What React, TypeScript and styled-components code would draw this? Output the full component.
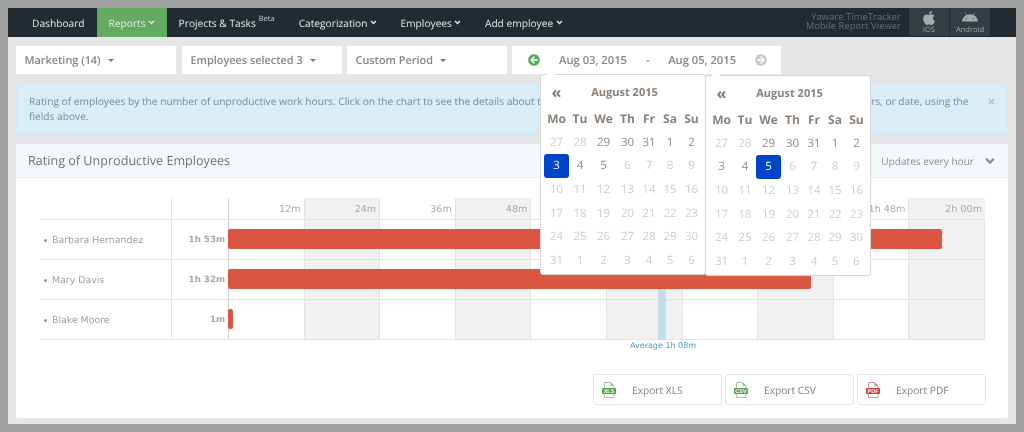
import React from 'react';
import styled, { createGlobalStyle } from 'styled-components';
import { FaAngleDown, FaAndroid, FaApple, FaArrowCircleLeft, FaArrowCircleRight, FaTimes } from 'react-icons/fa';

const Global = createGlobalStyle`
  html, body { margin: 0; padding: 0; height: 100%; overflow: hidden; background: #a0a0a0; }
  body { padding: 8px; box-sizing: border-box; font-family: "Open Sans", "Liberation Sans", sans-serif; text-rendering: geometricPrecision; }
  * { box-sizing: border-box; }
`;

const Frame = styled.div`
  width: 1008px; height: 416px; background: #e6e6e6; position: relative; overflow: hidden; filter: blur(.35px);
`;
const Nav = styled.nav`
  height: 29px; background: #212b30; display: flex; align-items: stretch; padding-left: 12px; color: #e4eaea;
`;
const NavItem = styled.div<{ $active?: boolean }>`
  padding: 0 12px; display: flex; align-items: center; gap: 3px; font-size: 10.2px; white-space: nowrap;
  background: ${p => (p.$active ? '#62ab61' : 'transparent')};
  sup { font-size: 7.5px; line-height: 8px; position: relative; top: -4px; color: #c9d0d2; }
`;
const NavChevron = styled(FaAngleDown)`
  margin: 0 -1.5px;
`;
const NavPromo = styled.div`
  margin-left: auto; display: flex; align-items: stretch; gap: 1px; padding-right: 26px;
`;
const PromoText = styled.div`
  font-size: 9.3px; line-height: 9.5px; color: #666f73; text-align: right; align-self: center; margin: 0 7px 3px 0; letter-spacing: .1px;
`;
const StoreButton = styled.div`
  width: 40px; height: 28px; background: #343d42; color: #a5abad; display: flex; flex-direction: column; align-items: center;
  font-size: 7.5px; line-height: 9px; padding-top: 2px;
`;
const Page = styled.main`
  padding: 9px 8px 0; display: flex; flex-direction: column; gap: 9px;
`;
const Filters = styled.div`
  display: flex; gap: 5px; height: 28px;
`;
const Select = styled.div`
  width: 160px; background: #fff; color: #858585; font-size: 10.9px; font-weight: 600; display: flex; align-items: center; padding-left: 8.5px; gap: 6px;
  &:nth-child(2) { margin-left: 1px; }
`;
const Caret = styled.span`
  border: 3px solid transparent; border-top-color: #777; border-bottom: 0; width: 0; height: 0; margin-left: 1px;
`;
const DateRange = styled.div`
  width: 269px; background: #fff; display: flex; align-items: center; padding-left: 16px; color: #858585; font-size: 11.2px; font-weight: 600;
`;
const DateValue = styled.span<{ $w: number }>`
  width: ${p => p.$w}px; text-align: center; white-space: nowrap;
`;
const Alert = styled.div`
  height: 52px; background: #d8edf6; border: 1px solid #d0e8f2; border-radius: 2px; padding: 10px 30px 0 12px; font-size: 10.2px; line-height: 15px; color: #6e8ea3; position: relative;
`;
const Close = styled.span`
  position: absolute; right: 11px; top: 13px; color: #b3c4cc; font-size: 9px; line-height: 9px;
`;
const Card = styled.section`
  background: #fff; border-radius: 2px; height: 274px; display: flex; flex-direction: column;
`;
const CardHeader = styled.header`
  height: 34px; background: #f3f9fb; border-bottom: 1px solid #e8eef0; display: flex; align-items: center; justify-content: space-between;
  padding: 0 11px 0 12px; color: #6b7378; font-size: 12.6px;
`;
const Updates = styled.div`
  display: flex; align-items: center; gap: 9px; font-size: 10.1px; color: #8a8f92;
`;
const Chart = styled.div`
  margin: 20px 0 0 24px; width: 945px; font-family: "DejaVu Sans", Verdana, sans-serif;
`;
const Row = styled.div<{ $h: number }>`
  display: grid; grid-template-columns: 132px 57px 1fr; height: ${p => p.$h}px; border-bottom: 1px solid #e3e3e3;
`;
const BlankCell = styled.div`
  border-right: 1px solid #e3e3e3;
`;
const AxisCell = styled(BlankCell)`
  border-right-color: #cfcfcf;
`;
const NameCell = styled.div`
  border-right: 1px solid #e3e3e3; display: flex; align-items: center; padding: 1px 0 0 4px; color: #a0a0a0; font-size: 9.4px; gap: 5px;
  &::before { content: ''; width: 3px; height: 3px; border-radius: 50%; background: #999; }
`;
const ValueCell = styled.div`
  border-right: 1px solid #cfcfcf; display: flex; align-items: center; justify-content: flex-end; padding: 1px 3px 0 0; color: #a8a8a8; font-size: 8.7px; font-weight: 700;
`;
const Plot = styled.div`
  display: grid; grid-template-columns: repeat(10, 1fr); position: relative;
`;
const Stripe = styled.div<{ $even: boolean }>`
  background: ${p => (p.$even ? '#f1f1f1' : '#fff')}; border-right: 1px solid #e3e3e3; color: #aaa; font-size: 9.6px; display: flex; justify-content: flex-end; align-items: center; padding: 1px 3px 0 0; white-space: nowrap;
  &:last-child { border-right: 0; }
`;
const Bar = styled.div`
  position: absolute; left: -1px; top: 9px; height: 20px; background: #da5640; border-radius: 2px; z-index: 2;
`;
const AverageBand = styled.div`
  position: absolute; left: 429px; top: 0; bottom: -1px; width: 8px; background: #c3deeb; z-index: 1;
`;
const AverageLabel = styled.div`
  position: absolute; left: 401px; top: 100%; margin-top: 2px; color: #4b9fcf; font-size: 8px; line-height: 10px; white-space: nowrap;
`;
const Exports = styled.div`
  display: flex; justify-content: flex-end; gap: 3px; padding-right: 22px; margin-top: 34px;
`;
const ExportButton = styled.div`
  width: 129px; height: 31px; border: 1px solid #e6e6e6; border-radius: 3px; display: flex; align-items: center; padding-left: 8px; gap: 16px; color: #7a7f85; font-size: 10.2px;
`;
const Popover = styled.div<{ $left: number; $top: number }>`
  position: absolute; left: ${p => p.$left}px; top: ${p => p.$top}px; width: 166px; height: 201px; background: #fff; border: 1px solid #d6d6d6; border-radius: 3px; padding: 5px 3px 0; z-index: 5;
  &::before { content: ''; position: absolute; left: 5px; top: -5px; border: 5px solid transparent; border-top: 0; border-bottom-color: #fff; }
`;
const PopHead = styled.div`
  display: flex; align-items: center; height: 24px; color: #8b8178; font-weight: 700; font-size: 11px;
`;
const Prev = styled.span`
  width: 25px; text-align: center; font-size: 16px; line-height: 16px; color: #7f7870;
`;
const Month = styled.span`
  width: 100px; text-align: center; margin-left: 5.5px;
`;
const Days = styled.div`
  display: grid; grid-template-columns: 25px 22px 25px 23px 20px 22px 21px; grid-auto-rows: 23.7px; margin-top: 2.5px;
`;
const Dow = styled.div`
  display: flex; align-items: center; justify-content: center; font-size: 12px; font-weight: 700; color: #8b8178;
`;
const Day = styled.div<{ $kind: 'off' | 'on' | 'sel' }>`
  display: flex; align-items: center; justify-content: center; font-size: 11.5px; border-radius: 3px;
  color: ${p => (p.$kind === 'off' ? '#cfcdcb' : p.$kind === 'on' ? '#8a8a8a' : '#fff')};
  background: ${p => (p.$kind === 'sel' ? '#0044cc' : 'transparent')};
`;
const Glyph = styled.text`
  font-family: "Liberation Sans", sans-serif; font-size: 5.5px; font-weight: 700; fill: #fff;
`;

const FileIcon = ({ color, label }: { color: string; label: string }) => (
  <svg width="14" height="16" viewBox="0 0 14 16">
    <path d="M2.5 .5h6l3.5 3.5v11.5h-9.5z" fill="#fff" stroke={color} strokeOpacity=".55" />
    <path d="M8.5 .5v3.5h3.5z" fill={color} fillOpacity=".6" />
    <rect y="6" width="14" height="6" rx="1" fill={color} />
    <Glyph x="7" y="11" textAnchor="middle">{label}</Glyph>
  </svg>
);

const dows = ['Mo', 'Tu', 'We', 'Th', 'Fr', 'Sa', 'Su'];
const cal = [27, 28, 29, 30, 31, 1, 2, 3, 4, 5, 6, 7, 8, 9, 10, 11, 12, 13, 14, 15, 16, 17, 18, 19, 20, 21, 22, 23, 24, 25, 26, 27, 28, 29, 30, 31, 1, 2, 3, 4, 5, 6];
const onIdx = [2, 3, 4, 5, 6, 7, 8, 9];

const Calendar = ({ left, top, sel }: { left: number; top: number; sel: number }) => (
  <Popover $left={left} $top={top}>
    <PopHead><Prev>«</Prev><Month>August 2015</Month></PopHead>
    <Days>
      {dows.map(d => <Dow key={d}>{d}</Dow>)}
      {cal.map((d, i) => (
        <Day key={i} $kind={i === sel ? 'sel' : onIdx.includes(i) ? 'on' : 'off'}>{d}</Day>
      ))}
    </Days>
  </Popover>
);

const ticks = ['12m', '24m', '36m', '48m', '1h 00m', '1h 12m', '1h 24m', '1h 36m', '1h 48m', '2h 00m'];
const rows = [
  { name: 'Barbara Hernandez', value: '1h 53m', width: 714 },
  { name: 'Mary Davis', value: '1h 32m', width: 583 },
  { name: 'Blake Moore', value: '1m', width: 5 },
];

const Stripes = ({ labels }: { labels?: boolean }) => (
  <>
    {ticks.map((t, i) => <Stripe key={t} $even={i % 2 === 1}>{labels ? t : null}</Stripe>)}
  </>
);

export default function App() {
  return (
    <>
      <Global />
      <Frame>
        <Nav>
          <NavItem>Dashboard</NavItem>
          <NavItem $active>Reports <NavChevron size={9} /></NavItem>
          <NavItem>Projects &amp; Tasks <sup>Beta</sup></NavItem>
          <NavItem>Categorization <NavChevron size={9} /></NavItem>
          <NavItem>Employees <NavChevron size={9} /></NavItem>
          <NavItem>Add employee <NavChevron size={9} /></NavItem>
          <NavPromo>
            <PromoText>Yaware.TimeTracker<br />Mobile Report Viewer</PromoText>
            <StoreButton><FaApple size={16} />iOS</StoreButton>
            <StoreButton><FaAndroid size={16} />Android</StoreButton>
          </NavPromo>
        </Nav>
        <Page>
          <Filters>
            <Select>Marketing (14) <Caret /></Select>
            <Select>Employees selected 3 <Caret /></Select>
            <Select>Custom Period <Caret /></Select>
            <DateRange>
              <FaArrowCircleLeft size={12} color="#4fae54" />
              <DateValue $w={106}>Aug 03, 2015</DateValue>
              <span>-</span>
              <DateValue $w={105}>Aug 05, 2015</DateValue>
              <FaArrowCircleRight size={12} color="#c8c8c8" />
            </DateRange>
          </Filters>
          <Alert>
            Rating of employees by the number of unproductive work hours. Click on the chart to see the details about the selected employee. You can choose a department, employees, filters, or date, using the fields above.
            <Close><FaTimes /></Close>
          </Alert>
          <Card>
            <CardHeader>
              Rating of Unproductive Employees
              <Updates>Updates every hour <FaAngleDown size={14} /></Updates>
            </CardHeader>
            <Chart>
              <Row $h={22}>
                <BlankCell />
                <AxisCell />
                <Plot><Stripes labels /></Plot>
              </Row>
              {rows.map((r, i) => (
                <Row $h={40} key={r.name}>
                  <NameCell>{r.name}</NameCell>
                  <ValueCell>{r.value}</ValueCell>
                  <Plot>
                    <Stripes />
                    <Bar style={{ width: r.width }} />
                    <AverageBand />
                    {i === 2 && <AverageLabel>Average 1h 08m</AverageLabel>}
                  </Plot>
                </Row>
              ))}
            </Chart>
            <Exports>
              <ExportButton><FileIcon color="#55a34f" label="XLS" /><span>Export XLS</span></ExportButton>
              <ExportButton><FileIcon color="#55a34f" label="CSV" /><span>Export CSV</span></ExportButton>
              <ExportButton><FileIcon color="#c9403a" label="PDF" /><span>Export PDF</span></ExportButton>
            </Exports>
          </Card>
        </Page>
        <Calendar left={532} top={66} sel={7} />
        <Calendar left={697} top={67} sel={9} />
      </Frame>
    </>
  );
}
